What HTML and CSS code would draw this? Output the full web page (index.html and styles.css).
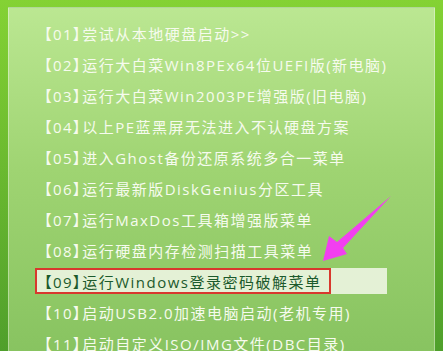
FILE: index.html
```html
<!DOCTYPE html>
<html lang="zh-CN">
<head>
    <meta charset="UTF-8">
    <title>大白菜启动菜单</title>
    <link rel="stylesheet" href="styles.css">
</head>
<body>
    <div class="frame">
        <div class="panel">
            <ul class="menu">
                <li class="item">【01】尝试从本地硬盘启动&gt;&gt;</li>
                <li class="item">【02】运行大白菜Win8PEx64位UEFI版(新电脑)</li>
                <li class="item">【03】运行大白菜Win2003PE增强版(旧电脑)</li>
                <li class="item">【04】以上PE蓝黑屏无法进入不认硬盘方案</li>
                <li class="item">【05】进入Ghost备份还原系统多合一菜单</li>
                <li class="item">【06】运行最新版DiskGenius分区工具</li>
                <li class="item">【07】运行MaxDos工具箱增强版菜单</li>
                <li class="item">【08】运行硬盘内存检测扫描工具菜单</li>
                <li class="item selected"><span class="mark">【09】运行Windows登录密码破解菜单</span></li>
                <li class="item">【10】启动USB2.0加速电脑启动(老机专用)</li>
                <li class="item">【11】启动自定义ISO/IMG文件(DBC目录)</li>
            </ul>
        </div>

        <svg class="arrow" width="443" height="351" viewBox="0 0 443 351">
            <polygon points="323,261 329,236 337,242 391,196 343,248 347,254" fill="#f23ff0"/>
        </svg>
    </div>
</body>
</html>
```

FILE: styles.css
```css
:root {
    --frame-top: #84d234;
    --frame-bottom: #4f9f2b;
    --panel-top: #bbe792;
    --panel-mid: #9fd472;
    --panel-bottom: #86c25f;
    --text-color: #f6fbee;
    --select-bg: #e4f1d6;
    --select-text: #1c5a2c;
    --select-border: #d8382d;
}

* {
    margin: 0;
    padding: 0;
    box-sizing: border-box;
}

body {
    width: 443px;
    height: 351px;
    overflow: hidden;
    font-family: "Open Sans", "Noto Sans CJK SC", sans-serif;
    background: linear-gradient(to bottom, var(--frame-top), var(--frame-bottom));
}

.frame {
    position: relative;
    height: 351px;
    padding: 7px 8px 0 8px;
}

.panel {
    width: 427px;
    height: 360px;
    border: 1px solid rgba(255, 255, 255, 0.35);
    border-bottom: none;
    background: linear-gradient(to bottom, var(--panel-top) 0%, var(--panel-mid) 45%, var(--panel-bottom) 100%);
    padding-top: 10px;
}

.menu {
    list-style: none;
    display: flex;
    flex-direction: column;
}

.item {
    height: 31px;
    display: flex;
    align-items: center;
    padding-left: 35px;
    color: var(--text-color);
    font-size: 15px;
    letter-spacing: 1.5px;
    font-feature-settings: "palt";
    white-space: nowrap;
}

.selected {
    margin-left: 26px;
    padding-left: 0;
    width: 352px;
    height: 26px;
    margin-top: 2px;
    margin-bottom: 3px;
    background: var(--select-bg);
    color: var(--select-text);
}

.mark {
    display: flex;
    align-items: center;
    width: 296px;
    height: 26px;
    border: 2px solid var(--select-border);
    padding-left: 7px;
}

.arrow {
    position: absolute;
    left: 0;
    top: 0;
}
```
